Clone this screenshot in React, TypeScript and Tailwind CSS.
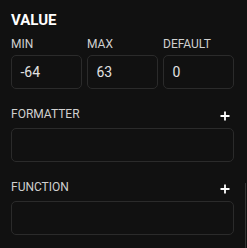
import React from 'react';

function Plus() {
  return (
    <svg width="10" height="10" viewBox="0 0 10 10" className="text-white">
      <path d="M5 0.5v9M0.5 5h9" stroke="currentColor" strokeWidth="1.8" />
    </svg>
  );
}

function NumberField({ label, value }: { label: string; value: string }) {
  return (
    <div className="flex flex-col">
      <label className="text-[12px] leading-[16px] text-[#d0d0d0]">{label}</label>
      <div className="mt-[3.5px] h-[34px] rounded-[5px] border border-[#2b2b2b] flex items-center pl-[8.5px] text-[14px] text-[#e2e2e2]">
        {value}
      </div>
    </div>
  );
}

function ListField({ label }: { label: string }) {
  return (
    <div className="flex flex-col">
      <div className="flex items-center justify-between pr-[4px]">
        <label className="text-[12px] leading-[16px] text-[#d0d0d0]">{label}</label>
        <span className="mt-[4px] flex"><Plus /></span>
      </div>
      <div className="mt-[6.5px] h-[34px] rounded-[5px] border border-[#2b2b2b]" />
    </div>
  );
}

export default function App() {
  return (
    <div
      className="relative w-[247px] h-[248px] bg-[#111111] overflow-hidden"
      style={{ fontFamily: 'Roboto, "Noto Sans", sans-serif' }}
    >
      <div className="pl-[11px] pr-[13px] pt-[9.5px]">
        <h2 className="text-[15px] leading-[20px] font-bold text-white">VALUE</h2>
        <div className="mt-[6px] grid grid-cols-3 gap-[5px]">
          <NumberField label="MIN" value="-64" />
          <NumberField label="MAX" value="63" />
          <NumberField label="DEFAULT" value="0" />
        </div>
        <div className="mt-[16.5px]">
          <ListField label="FORMATTER" />
        </div>
        <div className="mt-[16.5px]">
          <ListField label="FUNCTION" />
        </div>
      </div>
      <div className="absolute right-[1px] top-[183px] bottom-0 w-[1.5px] bg-[#333333]" />
    </div>
  );
}
